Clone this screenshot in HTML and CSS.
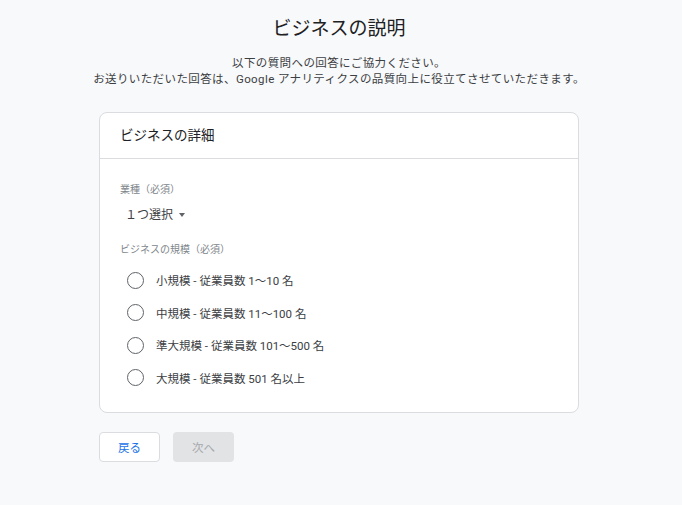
FILE: index.html
```html
<!DOCTYPE html>
<html lang="ja">
<head>
<meta charset="utf-8">
<link rel="stylesheet" href="styles.css">
</head>
<body>
<div class="page">
  <h1 class="title">ビジネスの説明</h1>
  <p class="intro">以下の質問への回答にご協力ください。<br>お送りいただいた回答は、Google アナリティクスの品質向上に役立てさせていただきます。</p>
  <section class="card">
    <div class="card-head">ビジネスの詳細</div>
    <div class="card-body">
      <div class="label">業種（必須）</div>
      <div class="select">１つ選択<span class="caret"></span></div>
      <div class="label label-size">ビジネスの規模（必須）</div>
      <div class="radios">
        <label class="radio"><span class="circle"></span>小規模 - 従業員数 1～10 名</label>
        <label class="radio"><span class="circle"></span>中規模 - 従業員数 11～100 名</label>
        <label class="radio"><span class="circle"></span>準大規模 - 従業員数 101～500 名</label>
        <label class="radio"><span class="circle"></span>大規模 - 従業員数 501 名以上</label>
      </div>
    </div>
  </section>
  <div class="actions">
    <button class="btn btn-back">戻る</button>
    <button class="btn btn-next">次へ</button>
  </div>
</div>
</body>
</html>
```
FILE: styles.css
```css
html, body {
  margin: 0;
  padding: 0;
  background: #f8f9fa;
}
body {
  font-family: Roboto, "Noto Sans CJK JP", sans-serif;
  color: #202124;
  width: 682px;
  height: 505px;
  overflow: hidden;
}
.page {
  display: flex;
  flex-direction: column;
  align-items: center;
  padding-left: 1px;
  padding-right: 5px;
}
.title {
  margin: 16px 0 0;
  font-size: 19px;
  font-weight: 400;
  line-height: 26px;
  color: #202124;
}
.intro {
  margin: 13px 0 0;
  font-size: 11.5px;
  line-height: 16px;
  letter-spacing: 0.4px;
  text-align: center;
  color: #3c4043;
  white-space: nowrap;
}
.card {
  margin-top: 25px;
  width: 478px;
  background: #fff;
  border: 1px solid #dadce0;
  border-radius: 8px;
}
.card-head {
  height: 45px;
  line-height: 44px;
  padding-left: 20px;
  font-size: 13.5px;
  color: #202124;
  border-bottom: 1px solid #dadce0;
}
.card-body {
  padding: 24px 20px 25px;
  display: flex;
  flex-direction: column;
}
.label {
  font-size: 10px;
  line-height: 14px;
  color: #80868b;
}
.select {
  margin-top: 9px;
  padding-left: 5px;
  font-size: 12px;
  line-height: 18px;
  color: #3c4043;
  display: flex;
  align-items: center;
}
.caret {
  width: 0;
  height: 0;
  margin-left: 6px;
  border-left: 3.5px solid transparent;
  border-right: 3.5px solid transparent;
  border-top: 4px solid #5f6368;
}
.label-size {
  margin-top: 19px;
}
.radios {
  margin-top: 14px;
  display: flex;
  flex-direction: column;
  gap: 14.5px;
}
.radio {
  display: flex;
  align-items: center;
  height: 18px;
  padding-left: 7px;
  font-size: 11.5px;
  color: #3c4043;
}
.circle {
  box-sizing: border-box;
  width: 17px;
  height: 17px;
  border: 1.6px solid #5f6368;
  border-radius: 50%;
  margin-right: 12px;
}
.actions {
  margin-top: 19px;
  width: 480px;
  display: flex;
  gap: 13px;
}
.btn {
  box-sizing: border-box;
  width: 61px;
  height: 30px;
  border-radius: 4px;
  font-family: Roboto, "Noto Sans CJK JP", sans-serif;
  font-size: 11.5px;
  padding: 0;
}
.btn-back {
  background: #fff;
  border: 1px solid #dadce0;
  color: #1a73e8;
}
.btn-next {
  background: #e2e3e5;
  border: none;
  color: #a5a8ac;
}
```
